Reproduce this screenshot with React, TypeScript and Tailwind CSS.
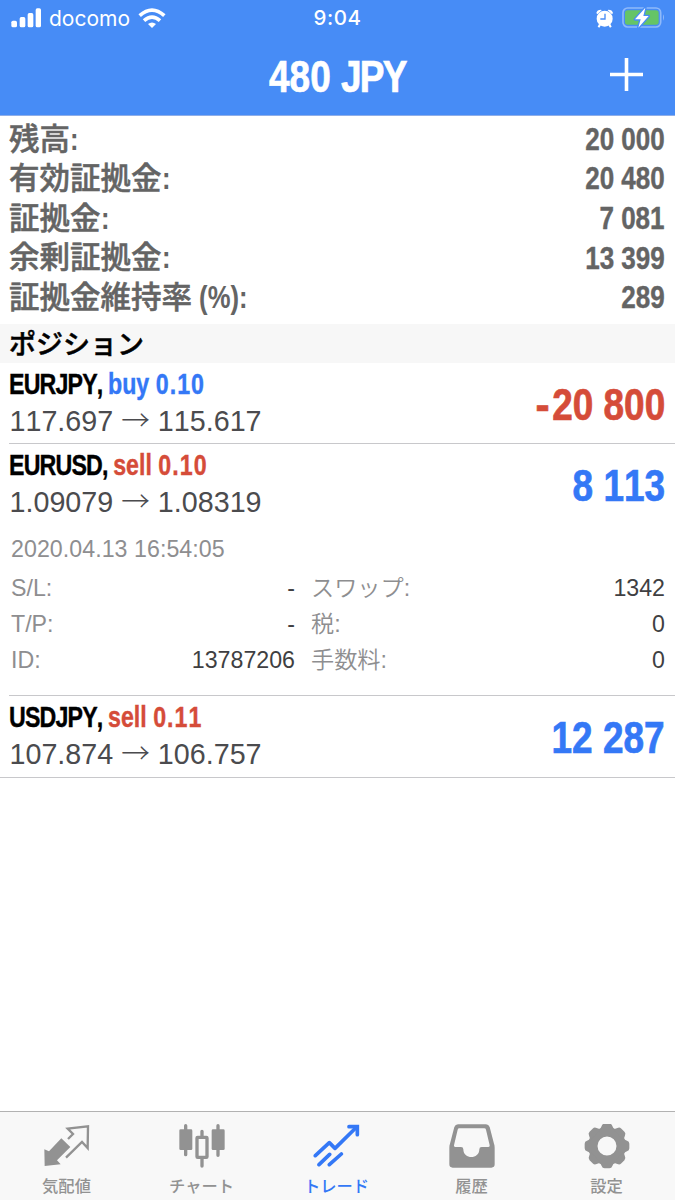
import type { ReactNode } from "react";

const summary = [
  { label: "残高", value: "20 000" },
  { label: "有効証拠金", value: "20 480" },
  { label: "証拠金", value: "7 081" },
  { label: "余剰証拠金", value: "13 399" },
  { label: "証拠金維持率", unit: "(%)", value: "289" },
];

// Condensed look: bold sans squeezed horizontally
const amount =
  "inline-block scale-x-84 text-[44px] leading-none font-bold whitespace-nowrap [-webkit-text-stroke:0.7px]";

type PositionProps = {
  symbol: string;
  side: "buy" | "sell";
  volume: string;
  open: string;
  current: string;
  profit: string;
  children?: ReactNode;
};

function Position({ symbol, side, volume, open, current, profit, children }: PositionProps) {
  const loss = profit.startsWith("-");

  return (
    <div>
      <div className="flex h-20 items-center justify-between pr-2.5 pl-[9px]">
        <div className="whitespace-nowrap">
          <div className="h-[36px] origin-left scale-x-80 text-[29px] leading-[35px] font-bold text-black [-webkit-text-stroke:0.4px]">
            <span className="tracking-[-1.05px]">{symbol}, </span>
            <span className={side === "buy" ? "text-[#3478f6]" : "text-[#d54c39]"}>
              {side} <span className="tracking-[1.3px]">{volume}</span>
            </span>
          </div>
          <div className="h-[36px] pl-[0.5px] text-[28.7px] leading-[36px] text-[#4b4b4e]">
            {open}{" "}
            <span className="font-['Noto_Sans_CJK_JP',sans-serif] leading-none font-light">→</span>{" "}
            {current}
          </div>
        </div>
        <div className={`${amount} origin-right pt-1 ${loss ? "text-[#d54c39]" : "text-[#3478f6]"}`}>
          {loss && <span className="mr-[3px] inline-block origin-right scale-x-115">-</span>}
          {profit.replace("-", "")}
        </div>
      </div>
      {children}
    </div>
  );
}

function Detail({ label, value }: { label: string; value: string }) {
  return (
    <div className="flex h-9 items-center justify-between">
      <span className="font-[350] text-[#8e8e90]">{label}</span>
      <span className="text-[#3f3f42]">{value}</span>
    </div>
  );
}

function Tab({ label, active, children }: { label: string; active?: boolean; children: ReactNode }) {
  return (
    <button
      className={`flex flex-1 flex-col items-center pt-3 pr-0.5 ${
        active ? "text-[#3478f6]" : "text-[#929292]"
      }`}
    >
      <span className="flex h-11 items-start">{children}</span>
      <span className="mt-1.5 text-[16.3px] leading-6 font-medium">{label}</span>
    </button>
  );
}

function StatusBar() {
  return (
    <div className="grid h-9 grid-cols-3 items-center font-['Inter',sans-serif] text-white">
      <div className="flex items-center pl-[11px]">
        <svg width="30" height="20" viewBox="0 0 90 60" fill="currentColor">
          <rect x="1" y="38" width="17" height="20" rx="5" />
          <rect x="26" y="27" width="17" height="31" rx="5" />
          <rect x="50" y="15" width="17" height="43" rx="5" />
          <rect x="74" y="1" width="16" height="57" rx="5" />
        </svg>
        <span className="ml-2 text-[21px] leading-none">docomo</span>
        <svg className="ml-2" width="28" height="20" viewBox="0 0 84 60">
          <g fill="none" stroke="currentColor" strokeWidth="11">
            <path d="M5 23Q42 -10 79 23" />
            <path d="M18 38Q42 17 66 38" />
          </g>
          <path d="M30 48Q42 39 54 48L42 60Z" fill="currentColor" />
        </svg>
      </div>
      <div className="text-center text-[20.5px] leading-none font-medium tracking-wide">9:04</div>
      <div className="flex items-center justify-end pr-[10px]">
        <svg className="mr-[9px]" width="17" height="19" viewBox="0 0 51 57">
          <g fill="currentColor">
            <circle cx="26" cy="29" r="24" />
            <path d="M1 12Q3 2 15 2L17 4 4 16ZM51 12Q49 2 37 2L35 4 48 16Z" />
            <path d="M9 45l6 4-5 7-5-3ZM43 45l-6 4 5 7 5-3Z" />
          </g>
          <path d="M27 14V30H13" fill="none" stroke="#478cf6" strokeWidth="4" />
        </svg>
        <svg width="43" height="22" viewBox="0 0 129 66">
          <rect x="3" y="3" width="113" height="57" rx="14" fill="none" stroke="#8fb9fa" strokeWidth="5" />
          <rect x="9" y="10" width="101" height="43" rx="8" fill="#65c466" />
          <path d="M123 22Q129 31 123 41Z" fill="#8fb9fa" />
          <path
            d="M70 2L39 37H56L49 62L80 27H64Z"
            fill="white"
            stroke="#478cf6"
            strokeWidth="8"
            strokeLinejoin="round"
            paintOrder="stroke"
          />
        </svg>
      </div>
    </div>
  );
}

export default function App() {
  return (
    <div className="flex h-[1200px] w-[675px] flex-col overflow-hidden bg-white font-['Liberation_Sans','Noto_Sans_CJK_JP',sans-serif] [font-kerning:none]">
      <header className="h-[116px] border-b border-[#8faee8] bg-[#478cf6]">
        <StatusBar />
        <div className="grid h-20 grid-cols-[1fr_auto_1fr] items-center text-white">
          <div />
          <h1 className={`${amount} pt-0.5`}>
            480 <span className="tracking-[-2px]">JPY</span>
          </h1>
          <svg className="mr-8 mb-[3px] justify-self-end" width="33" height="33" viewBox="0 0 33 33">
            <path d="M16.5 0V33M0 16.5H33" stroke="currentColor" strokeWidth="3.6" />
          </svg>
        </div>
      </header>

      <section className="h-52 pt-[3px] pr-2.5 pl-[9px] text-[#646464]">
        {summary.map((row) => (
          <div key={row.label} className="flex h-[39.6px] items-center">
            <span className="text-[30.5px] leading-none font-medium [-webkit-text-stroke:0.5px]">
              {row.label}
            </span>
            <span className="origin-left scale-x-84 text-[30.5px] leading-none font-bold whitespace-pre">
              {row.unit && ` ${row.unit}`}:
            </span>
            <span className="ml-auto origin-right scale-x-84 pt-px text-[31px] leading-none font-bold [-webkit-text-stroke:0.4px]">
              {row.value}
            </span>
          </div>
        ))}
      </section>

      <h2 className="h-[39px] bg-[#f7f7f7] pl-[9px] text-[27px] leading-[42px] font-medium text-black [-webkit-text-stroke:0.5px]">
        ポジション
      </h2>

      <main className="flex-1">
        <Position
          symbol="EURJPY"
          side="buy"
          volume="0.10"
          open="117.697"
          current="115.617"
          profit="-20 800"
        />
        <div className="ml-[9px] h-px bg-[#c8c8cb]" />
        <Position
          symbol="EURUSD"
          side="sell"
          volume="0.10"
          open="1.09079"
          current="1.08319"
          profit="8 113"
        >
          <div className="h-[171px] pt-[7px] pr-2.5 pl-[11px] text-[23.2px] leading-9">
            <div className="tracking-[0.05px] text-[#8e8e90]">2020.04.13 16:54:05</div>
            <div className="mt-[3px] flex gap-4">
              <div className="w-[284px]">
                <Detail label="S/L:" value="-" />
                <Detail label="T/P:" value="-" />
                <Detail label="ID:" value="13787206" />
              </div>
              <div className="flex-1">
                <Detail label="スワップ:" value="1342" />
                <Detail label="税:" value="0" />
                <Detail label="手数料:" value="0" />
              </div>
            </div>
          </div>
        </Position>
        <div className="ml-[9px] h-px bg-[#c8c8cb]" />
        <Position
          symbol="USDJPY"
          side="sell"
          volume="0.11"
          open="107.874"
          current="106.757"
          profit="12 287"
        />
        <div className="mt-px h-px bg-[#c8c8cb]" />
      </main>

      <nav className="flex h-[89px] border-t border-[#b2b2b2] bg-[#f8f8f8]">
        <Tab label="気配値">
          <svg width="46" height="42" viewBox="132 56 138 126">
            <path d="M133 132L147 138L184 99L211 125L171 165L182 177L134 182Z" fill="currentColor" />
            <path
              d="M204 101L219 86L203 70L264 63L263 128L246 110L198 157"
              fill="none"
              stroke="currentColor"
              strokeWidth="7"
            />
          </svg>
        </Tab>
        <Tab label="チャート">
          <svg width="46" height="44" viewBox="536 56 138 132">
            <g stroke="currentColor" strokeWidth="10" strokeLinecap="round">
              <path d="M556 61V148M605 78V92M605 160V182M653 61V150" />
            </g>
            <g fill="currentColor">
              <rect x="537" y="72" width="39" height="62" rx="4" />
              <rect x="634" y="72" width="39" height="62" rx="4" />
            </g>
            <rect x="590" y="96" width="30" height="60" rx="2" fill="none" stroke="currentColor" strokeWidth="10" />
          </svg>
        </Tab>
        <Tab label="トレード" active>
          <svg width="47" height="43" viewBox="160 56 141 129">
            <g fill="none" stroke="currentColor" strokeWidth="11" strokeLinecap="round">
              <path d="M167 151L209 112L226 129L291 65" strokeLinejoin="round" />
              <path d="M268 64H293V88" />
              <path d="M178 178L210 147M209 178L245 146" />
            </g>
          </svg>
        </Tab>
        <Tab label="履歴">
          <svg width="46" height="44" viewBox="569 57 138 132">
            <path
              fill="currentColor"
              fillRule="evenodd"
              d="M596 58H680Q688 58 691 66L704 116Q706 120 706 128V178Q706 188 696 188H580Q570 188 570 178V128Q570 120 572 116L585 66Q588 58 596 58ZM600 70Q596 70 595 74L584 121Q583 126 588 126H605Q612 126 612 133C612 164 660 164 660 133Q660 126 667 126H687Q692 126 691 121L680 74Q679 70 675 70Z"
            />
          </svg>
        </Tab>
        <Tab label="設定">
          <svg width="46" height="46" viewBox="-69 -66 138 138">
            <circle r="42.5" fill="none" stroke="currentColor" strokeWidth="28" />
            <g fill="currentColor">
              {[0, 45, 90, 135, 180, 225, 270, 315].map((angle) => (
                <path
                  key={angle}
                  transform={`rotate(${angle})`}
                  d="M-24 -48Q-18 -54 -16 -60Q-14 -67 -7 -67H7Q14 -67 16 -60Q18 -54 24 -48Z"
                />
              ))}
            </g>
          </svg>
        </Tab>
      </nav>
    </div>
  );
}
